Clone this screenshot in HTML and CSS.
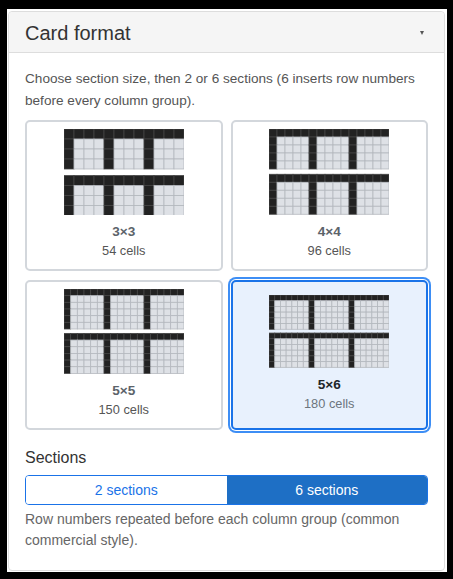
FILE: index.html
```html
<!DOCTYPE html>
<html lang="en">
<head>
    <meta charset="UTF-8">
    <meta name="viewport" content="width=device-width, initial-scale=1.0">
    <title>Card format</title>
    <link rel="stylesheet" href="styles.css">
</head>
<body>
    <div class="panel">
        <div class="panel-heading">
            <h3>Card format</h3>
            <span class="caret"></span>
        </div>
        <div class="panel-body">
            <p class="intro">Choose section size, then 2 or 6 sections (6 inserts row numbers before every column group).</p>
            <div class="formats">
                <div class="format" data-rows="3" data-cols="3">
                    <svg class="preview"></svg>
                    <strong>3×3</strong>
                    <span>54 cells</span>
                </div>
                <div class="format" data-rows="4" data-cols="4">
                    <svg class="preview"></svg>
                    <strong>4×4</strong>
                    <span>96 cells</span>
                </div>
                <div class="format" data-rows="5" data-cols="5">
                    <svg class="preview"></svg>
                    <strong>5×5</strong>
                    <span>150 cells</span>
                </div>
                <div class="format selected" data-rows="5" data-cols="6">
                    <svg class="preview"></svg>
                    <strong>5×6</strong>
                    <span>180 cells</span>
                </div>
            </div>

            <div class="sections-label">Sections</div>
            <div class="toggle">
                <button>2 sections</button>
                <button class="active">6 sections</button>
            </div>
            <p class="help">Row numbers repeated before each column group (common commercial style).</p>
        </div>
    </div>

    <script>
        const NS = 'http://www.w3.org/2000/svg';

        function drawPreview(svg, rows, cols) {
            let cell = 120 / (3 * (cols + 1));
            let block = (rows + 1) * cell;
            let gap = cell * 0.66;
            let height = block * 2 + gap;
            svg.setAttribute('width', 120);
            svg.setAttribute('height', height.toFixed(2));
            svg.setAttribute('viewBox', `0 0 120 ${height.toFixed(2)}`);

            for (let b = 0; b < 2; b++) {
                for (let g = 0; g < 3; g++) {
                    for (let r = 0; r <= rows; r++) {
                        for (let c = 0; c <= cols; c++) {
                            let dark = r === 0 || c === 0;
                            let rect = document.createElementNS(NS, 'rect');
                            rect.setAttribute('x', ((g * (cols + 1) + c) * cell).toFixed(2));
                            rect.setAttribute('y', (b * (block + gap) + r * cell).toFixed(2));
                            rect.setAttribute('width', cell.toFixed(2));
                            rect.setAttribute('height', cell.toFixed(2));
                            rect.setAttribute('fill', dark ? '#222' : '#dee1e6');
                            rect.setAttribute('stroke', dark ? '#444' : '#b4b8be');
                            rect.setAttribute('stroke-width', '0.8');
                            svg.appendChild(rect);
                        }
                    }
                }
            }
        }

        document.querySelectorAll('.format').forEach(card => {
            drawPreview(card.querySelector('.preview'), +card.dataset.rows, +card.dataset.cols);
        });
    </script>
</body>
</html>
```

FILE: styles.css
```css
html { background: #000; }
body { margin: 9px 6px 7px 7px; padding: 2px 2px 1px 1px; background: #fff; height: calc(100vh - 16px); box-sizing: border-box; display: flex; flex-direction: column; font-family: "Liberation Sans", Arial, sans-serif; color: #333; }

.panel { flex: 1; border: 1px solid #ddd; border-radius: 4px; display: flex; flex-direction: column; }
.panel-heading { display: flex; align-items: center; justify-content: space-between; padding: 10px 16px 8px; background: #f5f5f5; border-bottom: 1px solid #ddd; border-radius: 4px 4px 0 0; }
.panel-heading h3 { margin: 0; font-size: 20px; line-height: 22px; font-weight: normal; color: #333; }
.caret { width: 0; height: 0; border-left: 2.5px solid transparent; border-right: 2.5px solid transparent; border-top: 4px solid #555; margin-right: 4px; }

.panel-body { padding: 15px 16px 16px; }
.intro { margin: 0 0 8px; font-size: 13.6px; line-height: 21.8px; color: #555; }

.formats { display: grid; grid-template-columns: 1fr 1fr; gap: 9px 8px; }
.format { display: flex; flex-direction: column; align-items: center; justify-content: center; padding: 7px 0 8px; border: 2px solid #d3d7dc; border-radius: 5px; background: #fff; }
.format .preview { display: block; margin-bottom: 7px; }
.format strong { font-size: 13.6px; line-height: 19px; color: #5c636a; }
.format span { font-size: 12.8px; line-height: 20px; color: #555; }
.format.selected { border-color: #1a73e8; background: #e8f1fd; box-shadow: 0 0 0 1px #fff, 0 0 0 3px #3d8ef5; }
.format.selected strong { color: #212529; }
.format.selected span { color: #6c757d; }

.sections-label { margin-top: 18px; font-size: 16px; line-height: 20px; color: #333; }
.toggle { display: flex; margin-top: 7px; border: 1px solid #1a73e8; border-radius: 4px; overflow: hidden; }
.toggle button { flex: 1; height: 28px; border: 0; background: #fff; color: #1a73e8; font-family: inherit; font-size: 14px; }
.toggle button.active { background: #1e6fc5; color: #fff; }

.help { margin: 4px 0 0; font-size: 14px; line-height: 21px; color: #666; }
```
